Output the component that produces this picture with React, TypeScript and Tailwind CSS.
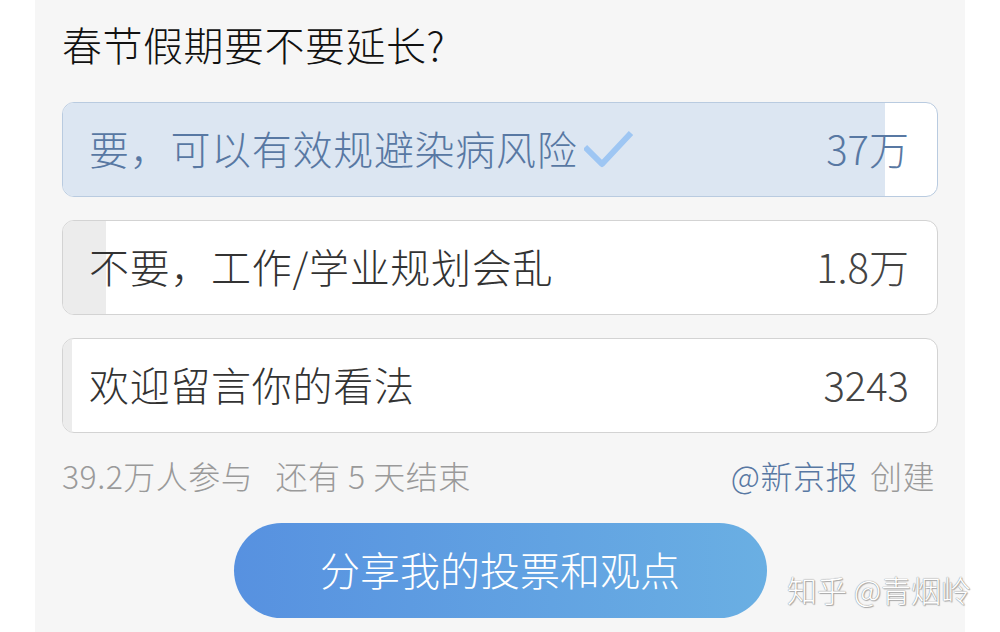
import type { ReactNode } from 'react';

const font = { fontFamily: '"Noto Sans CJK SC", "Noto Sans", sans-serif' };

type Option = {
  label: string;
  count: string;
  percent: number;
  voted?: boolean;
};

const options: Option[] = [
  { label: '要，可以有效规避染病风险', count: '37万', percent: 94, voted: true },
  { label: '不要，工作/学业规划会乱', count: '1.8万', percent: 4.9 },
  { label: '欢迎留言你的看法', count: '3243', percent: 1 },
];

function CheckMark() {
  return (
    <svg width="50" height="40" viewBox="0 0 50 40" className="ml-[7px] mt-[4px] shrink-0">
      <path d="M1 17 L18 34 L47 3" fill="none" stroke="#9ec6f3" strokeWidth="6" strokeLinejoin="round" />
    </svg>
  );
}

function OptionRow({ option }: { option: Option }) {
  const voted = option.voted;
  return (
    <div
      className={`relative h-[95px] rounded-[12px] border overflow-hidden bg-white ${
        voted ? 'border-[#b9cbe0]' : 'border-[#d3d3d3]'
      }`}
    >
      <div
        className={`absolute inset-y-0 left-0 ${voted ? 'bg-[#dce6f2]' : 'bg-[#ececec]'}`}
        style={{ width: `${option.percent}%` }}
      />
      <div className="relative flex h-full items-center justify-between pb-[4px] pl-[26px] pr-[28px]">
        <div className="flex items-center">
          <span className={`text-[40px] tracking-[0.7px] leading-none ${voted ? 'text-[#5878a3]' : 'text-[#333]'}`}>
            {option.label}
          </span>
          {voted && <CheckMark />}
        </div>
        <span className={`text-[40px] leading-none ${voted ? 'text-[#5878a3]' : 'text-[#444]'}`}>{option.count}</span>
      </div>
    </div>
  );
}

function Watermark({ children }: { children: ReactNode }) {
  return (
    <div
      className="absolute left-[787px] top-[574px] text-[30px] leading-none text-white"
      style={{ textShadow: '0 0 1px #999, 0 0 1px #999, 1px 1px 1px #aaa' }}
    >
      {children}
    </div>
  );
}

export default function App() {
  return (
    <div className="relative h-[632px] w-[1000px] overflow-hidden bg-white font-light" style={font}>
      <div className="ml-[35px] h-full w-[930px] bg-[#f6f6f6] px-[27px] pt-[20px]">
        <h1 className="text-[40px] font-light tracking-[0.5px] leading-[48px] text-[#111]">春节假期要不要延长?</h1>

        <div className="mt-[34px] flex flex-col gap-[23px]">
          {options.map((o) => (
            <OptionRow key={o.label} option={o} />
          ))}
        </div>

        <div className="mt-[24px] flex h-[36px] items-center justify-between text-[32px] tracking-[0.5px] leading-none text-[#9a9a9a]">
          <span>
            39.2万人参与<span className="ml-[22px]">还有 5 天结束</span>
          </span>
          <span className="pr-[3px]">
            <span className="text-[#5878a3]">@新京报</span>
            <span className="ml-[12px]">创建</span>
          </span>
        </div>

        <div className="mt-[30px] flex justify-center">
          <button className="flex h-[95px] w-[533px] items-center justify-center rounded-full bg-gradient-to-r from-[#5791e0] to-[#6aafe3] pb-[4px] text-[40px] font-light leading-none text-white">
            分享我的投票和观点
          </button>
        </div>
      </div>

      <Watermark>知乎 @青烟岭</Watermark>
    </div>
  );
}
